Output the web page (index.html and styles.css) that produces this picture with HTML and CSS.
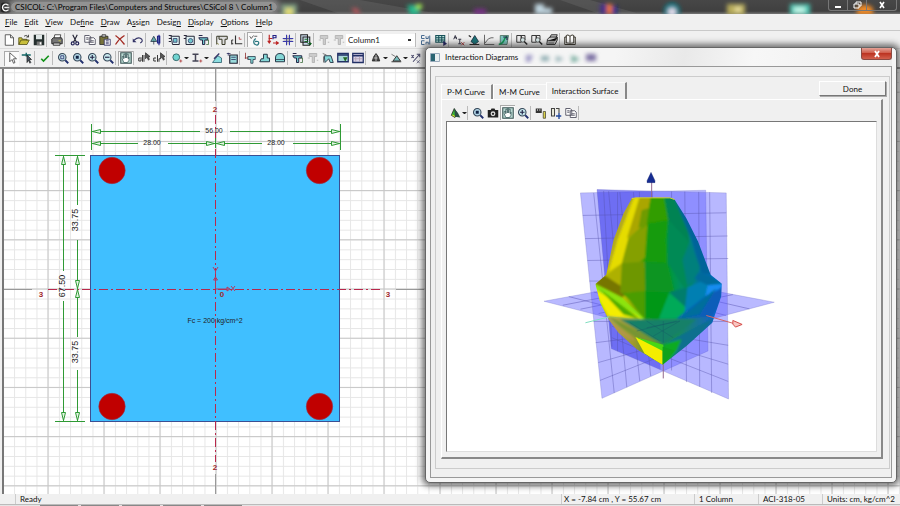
FILE: index.html
```html
<!DOCTYPE html>
<html lang="en">
<head>
<meta charset="utf-8">
<title>CSICOL</title>
<link rel="stylesheet" href="styles.css">
</head>
<body>
<svg class="defs" aria-hidden="true">
  <defs>
    <symbol id="new" viewBox="0 0 16 16"><path d="M3 1h7l4 4v10H3z" fill="#fff" stroke="#333"/><path d="M10 1v4h4" fill="none" stroke="#333"/></symbol>
    <symbol id="open" viewBox="0 0 16 16"><path d="M1 14V5h4l1 2h6v2M1 14l3-6h11l-3 6z" fill="#c8bf3c" stroke="#4a4710"/><path d="M8 3q3-3 6 1M14 1v3h-3" fill="none" stroke="#222"/></symbol>
    <symbol id="save" viewBox="0 0 16 16"><path d="M1 1h14v14H1z" fill="#26302f"/><path d="M4 1h8v6H4z" fill="#dfe6e6"/><path d="M5 10h7v5H5z" fill="#777"/><path d="M9 11h2v3H9z" fill="#fff"/></symbol>
    <symbol id="print" viewBox="0 0 16 16"><path d="M4 6l1-5h8l-1 5z" fill="#fff" stroke="#222"/><path d="M1 7l2-2h11l1 2v6H1z" fill="#777" stroke="#111"/><path d="M3 12h9v3H3z" fill="#ddd" stroke="#111"/><path d="M10 9h3" stroke="#dd4"/></symbol>
    <symbol id="cut" viewBox="0 0 16 16"><path d="M5 1l5 10M11 1L6 11" stroke="#223" stroke-width="1.5"/><g fill="none" stroke="#225" stroke-width="1.6"><circle cx="5" cy="12.500" r="2"/><circle cx="11" cy="12.500" r="2"/></g></symbol>
    <symbol id="copy" viewBox="0 0 16 16"><g fill="#fff" stroke="#445" stroke-width="1.100"><path d="M1 2h6l2 2v7H1zM7 5h6l2 2v7H7z"/><path d="M3 5h3M3 7h3M9 9h4M9 11h4"/></g></symbol>
    <symbol id="paste" viewBox="0 0 16 16"><path d="M1 3h11v11H1z" fill="#77733c" stroke="#222"/><path d="M4 1h5v3H4z" fill="#ccc" stroke="#222"/><path d="M7 7h8v8H7z" fill="#fff" stroke="#225"/><path d="M9 9h4M9 11h4M9 13h4" stroke="#225"/></symbol>
    <symbol id="delete" viewBox="0 0 16 16"><path d="M2 2q6 4 12 12M14 2Q7 6 2 14" fill="none" stroke="#a32c24" stroke-width="1.700"/></symbol>
    <symbol id="undo" viewBox="0 0 16 16"><path d="M3 8q6-5 10-1q2 3-2 5" fill="none" stroke="#336" stroke-width="1.500"/><path d="M1 6v5h5z" fill="#336"/></symbol>
    <symbol id="draw" viewBox="0 0 16 16"><path d="M5 3l-4 7h8zM5 9v5" fill="#6aa" stroke="#234"/><path d="M10 3h3v9h-3zM12 1v14" fill="#8cc" stroke="#228" stroke-width="1.500"/></symbol>
    <symbol id="secA" viewBox="0 0 16 16"><path d="M1 2h4M1 6h3M1 10h3M4 3h11v11H6z" fill="#dff3f4" stroke="#223" stroke-width="1.300"/><path d="M7 6h5v5H7z" fill="#6fc7cc" stroke="#336"/></symbol>
    <symbol id="secB" viewBox="0 0 16 16"><path d="M1 2h4M1 6h3M4 3h11v11H4z" fill="#dff3f4" stroke="#223" stroke-width="1.300"/><circle cx="10" cy="9" r="3" fill="#6fc7cc" stroke="#336"/></symbol>
    <symbol id="secC" viewBox="0 0 16 16"><path d="M1 2h5M1 5h12v3H9v6H6V8H3z" fill="#6fc7cc" stroke="#224" stroke-width="1.300"/><path d="M11 8h3v6h-3" fill="none" stroke="#363"/></symbol>
    <symbol id="tee" viewBox="0 0 16 16"><path d="M1 3v11M1 3h3M4 3h11v4h-3v7H8V7H4z" fill="#ddd" stroke="#332" stroke-width="1.300"/><path d="M1 12l3 2" stroke="#884"/></symbol>
    <symbol id="axisL" viewBox="0 0 16 16"><path d="M6 2v11h9M1 8v6M1 8h2M1 13h2" fill="none" stroke="#333" stroke-width="1.500"/><path d="M11 4v3h3" fill="none" stroke="#a33"/></symbol>
    <symbol id="snap" viewBox="0 0 16 16"><path d="M1 3l2 3 3-4M7 3h4" fill="none" stroke="#333"/><path d="M9 6q-4 3-2 7q5 4 6-1q0-3-5-2" fill="none" stroke="#2a7780" stroke-width="1.700"/></symbol>
    <symbol id="load" viewBox="0 0 16 16"><path d="M3 1v10M1 9l2 3 2-3M2 6h5M8 12h7M12 10l3 2-3 2" fill="none" stroke="#b22" stroke-width="1.500"/><path d="M8 7V2h4v3H8" fill="none" stroke="#228" stroke-width="1.500"/></symbol>
    <symbol id="cross" viewBox="0 0 16 16"><path d="M6 1v14M10 1v14M1 6h14M1 10h14" stroke="#33a" stroke-width="1.300"/><path d="M8 2v12M2 8h12" stroke="#888"/></symbol>
    <symbol id="report" viewBox="0 0 16 16"><path d="M1 1h9v10H1zM4 4h9v11H4z" fill="#cde" stroke="#222" stroke-width="1.400"/><path d="M6 7h5M6 10h5M10 13h5M13 11l2 2-2 2" stroke="#162" stroke-width="1.300"/></symbol>
    <symbol id="teeOff" viewBox="0 0 16 16"><path d="M3 2h10v4h-3v8H7V6H3z" fill="#ccc" stroke="#aaa"/><path d="M1 8h3M13 11h2" stroke="#aaa"/></symbol>
    <symbol id="cucn" viewBox="0 0 16 16"><path d="M6 2H2v4h4M8 3v3h3V3M6 9H2v5h4M8 14v-3h3v3M13 2v12" fill="none" stroke="#44688e" stroke-width="1.300"/></symbol>
    <symbol id="grid" viewBox="0 0 16 16"><path d="M1 2h12v9H1zM1 5h12M1 8h12M5 2v9M9 2v9" fill="#bde3dc" stroke="#165058" stroke-width="1.400"/><path d="M11 9l5 4-5 3z" fill="#226"/></symbol>
    <symbol id="ax" viewBox="0 0 16 16"><path d="M1 7l2-5 2 5M2 5h3M7 7h4M9 7v6M7 13h4" fill="none" stroke="#334" stroke-width="1.300"/><path d="M11 11l4 4M15 11l-4 4" stroke="#a33" stroke-width="1.300"/></symbol>
    <symbol id="surface" viewBox="0 0 16 16"><path d="M9 2l5 8-5 4-5-4z" fill="#1a7378" stroke="#123"/><path d="M1 2l3 2M2 14h13" stroke="#222" stroke-width="1.500"/></symbol>
    <symbol id="curve" viewBox="0 0 16 16"><path d="M2 1v13h13M3 12Q7 4 14 5" fill="none" stroke="#666" stroke-width="1.300"/></symbol>
    <symbol id="sheet" viewBox="0 0 16 16"><path d="M3 2h11l-2 12H3z" fill="#7cc4be" stroke="#465"/><path d="M1 14q6-1 8-8l3-3" fill="none" stroke="#195" stroke-width="2"/><path d="M7 4h5v4" fill="none" stroke="#224" stroke-width="1.500"/></symbol>
    <symbol id="find" viewBox="0 0 16 16"><path d="M1 2h6v9H1zM7 2h5v6H7z" fill="#eee" stroke="#333" stroke-width="1.300"/><circle cx="9" cy="8" r="3" fill="#dee" stroke="#333"/><path d="M11 10l4 4" stroke="#222" stroke-width="2"/></symbol>
    <symbol id="printer2" viewBox="0 0 16 16"><path d="M5 5l2-4h8l-2 5M2 7l3-3h10v4l-3 6H1z" fill="#ccc" stroke="#222" stroke-width="1.200"/><path d="M2 9h10l3-4M3 12h8" stroke="#222"/></symbol>
    <symbol id="book" viewBox="0 0 16 16"><path d="M8 3Q5 0 3 2v10q3-1 5 2q2-3 5-2V2Q11 0 8 3v10M3 4H1v10h14V4h-2" fill="#fff" stroke="#302c22" stroke-width="1.300"/></symbol>
    <symbol id="pointer" viewBox="0 0 16 16"><path d="M5 1v12l3-3 2 5 2-1-2-5h4z" fill="#fff" stroke="#333"/></symbol>
    <symbol id="reshape" viewBox="0 0 16 16"><path d="M1 4h12M7 1v5" stroke="#166" stroke-width="1.800"/><path d="M8 4v10l2-3 2 4 1-1-2-4h3z" fill="#456" stroke="#222"/></symbol>
    <symbol id="check" viewBox="0 0 16 16"><path d="M3 9l3 3 7-7" fill="none" stroke="#14941b" stroke-width="2.200"/></symbol>
    <symbol id="zoomW" viewBox="0 0 16 16"><circle cx="7" cy="7" r="5" fill="#bfe0e8" stroke="#345" stroke-width="1.400"/><path d="M5 5h4v4H5z" fill="none" stroke="#226"/><path d="M11 11l4 4" stroke="#22306e" stroke-width="2.400"/></symbol>
    <symbol id="zoomF" viewBox="0 0 16 16"><circle cx="7" cy="7" r="5" fill="#b4d7e8" stroke="#345" stroke-width="1.400"/><path d="M5 5h4v4H5z" fill="#124"/><path d="M11 11l4 4" stroke="#22306e" stroke-width="2.400"/></symbol>
    <symbol id="zoomP" viewBox="0 0 16 16"><circle cx="7" cy="7" r="5" fill="#c7e8ee" stroke="#345" stroke-width="1.400"/><path d="M4 7h6M7 4v6" stroke="#224" stroke-width="1.500"/><path d="M11 11l4 4" stroke="#22306e" stroke-width="2.400"/></symbol>
    <symbol id="zoomM" viewBox="0 0 16 16"><circle cx="7" cy="7" r="5" fill="#c7e8ee" stroke="#345" stroke-width="1.400"/><path d="M4 7h6" stroke="#224" stroke-width="1.500"/><path d="M11 11l4 4" stroke="#22306e" stroke-width="2.400"/></symbol>
    <symbol id="hand" viewBox="0 0 16 16"><path d="M1 1h14v14H1z" fill="#b9d8d2" stroke="#3c5555" stroke-width="1.400"/><path d="M5 14l-2-5V6h2v3-6h2v5-6h2v6-5h2v6l1-2v4l-2 3z" fill="#fff" stroke="#355"/></symbol>
    <symbol id="all" viewBox="0 0 16 16"><path d="M3 8h-2v4h3V7M6 4v9M8 4v9" fill="none" stroke="#333" stroke-width="1.300"/><path d="M10 1v8l2-2 2 4 1-1-1-4h2z" fill="#555" stroke="#333"/></symbol>
    <symbol id="clr" viewBox="0 0 16 16"><path d="M4 8H1v4h3M6 4v9M8 13V9h2" fill="none" stroke="#333" stroke-width="1.300"/><path d="M10 1v8l2-2 2 4 1-1-1-4h2z" fill="#555" stroke="#333"/></symbol>
    <symbol id="circle" viewBox="0 0 16 16"><circle cx="7" cy="7" r="4.500" fill="#71d5d2" stroke="#34686b" stroke-width="1.300"/><path d="M11 12h4M13 10v4" stroke="#a33"/></symbol>
    <symbol id="ibeam" viewBox="0 0 16 16"><path d="M2 3h8M6 3v9M2 12h8" fill="none" stroke="#445" stroke-width="2"/><path d="M11 12h4M13 10v4" stroke="#a33"/></symbol>
    <symbol id="poly" viewBox="0 0 16 16"><path d="M2 14l7-9 5 3v6z" fill="#8cdde0" stroke="#256"/><path d="M4 9l7-7" stroke="#336" stroke-width="1.600"/></symbol>
    <symbol id="rebar" viewBox="0 0 16 16"><path d="M5 4h10v11H5z" fill="#99dadb" stroke="#223" stroke-width="1.500"/><path d="M1 2h5M3 1v4M7 7h6M7 10h6" stroke="#225"/></symbol>
    <symbol id="shapeT" viewBox="0 0 16 16"><path d="M5 6h10v4h-3v5H9v-5H5z" fill="#85d7d7" stroke="#234"/><path d="M2 1v8M1 8h5" stroke="#822"/></symbol>
    <symbol id="shapeL" viewBox="0 0 16 16"><path d="M1 13l2-4h3V3h5v5h3v5z" fill="#85d7d7" stroke="#234" stroke-width="1.300"/></symbol>
    <symbol id="shapeD" viewBox="0 0 16 16"><path d="M2 13V8q0-6 6-6t6 6v5z" fill="#85d7d7" stroke="#234" stroke-width="1.300"/><path d="M2 10h12" stroke="#234"/></symbol>
    <symbol id="editS" viewBox="0 0 16 16"><path d="M3 5h9l3 9h-4l-2-5-5 5z" fill="#85d7d7" stroke="#234" stroke-width="1.200"/><path d="M1 2l5 2M2 6v8" stroke="#555"/></symbol>
    <symbol id="table" viewBox="0 0 16 16"><path d="M1 2h14v12H1z" fill="#d9d3e9" stroke="#223066" stroke-width="1.700"/><path d="M1 5h14" stroke="#223066" stroke-width="2"/><path d="M5 6v7M10 6v7M2 9h12" stroke="#a9a"/></symbol>
    <symbol id="tableD" viewBox="0 0 16 16"><path d="M1 2h14v11H1z" fill="#a9d8d8" stroke="#223066" stroke-width="1.700"/><path d="M1 4h14" stroke="#223066" stroke-width="2"/><path d="M8 7h6l-3 6z" fill="#262"/></symbol>
    <symbol id="bell" viewBox="0 0 16 16"><path d="M3 12l2-6 3-4 3 4 2 6z" fill="#444" stroke="#222"/><path d="M8 4v8M5 8h5" stroke="#ddd"/></symbol>
    <symbol id="angle" viewBox="0 0 16 16"><path d="M2 13h13M4 12l5-7 5 7z" fill="#7bb" stroke="#333" stroke-width="1.300"/><path d="M2 3l5 3" stroke="#555"/></symbol>
    <symbol id="scale" viewBox="0 0 16 16"><path d="M4 13l8-9M9 3h4v4M2 4l3 4M5 4L2 8" fill="none" stroke="#446" stroke-width="1.400"/><path d="M9 11l4 4M13 11l-4 4" stroke="#557"/></symbol>
    <symbol id="model" viewBox="0 0 16 16"><path d="M7 2l4 7-3 5-5-3z" fill="#38b536" stroke="#222"/><path d="M7 2l5 6 3 6-7-1" fill="#2b4f44"/><path d="M3 10l4 1 1 3" fill="#ed2"/></symbol>
    <symbol id="camera" viewBox="0 0 16 16"><path d="M1 4h4l1-2h4l1 2h4v10H1z" fill="#222"/><circle cx="8" cy="9" r="3.200" fill="#ddd"/><circle cx="8" cy="9" r="1.500" fill="#222"/></symbol>
    <symbol id="props" viewBox="0 0 16 16"><path d="M1 2h8v6H1z" fill="#333"/><path d="M3 4h1M6 4h1" stroke="#fff" stroke-width="2"/><path d="M11 6h3v9h-3z" fill="#dcd24a" stroke="#443"/></symbol>
    <symbol id="export" viewBox="0 0 16 16"><path d="M2 2h4v10H2zM8 2h4v6" fill="#eed" stroke="#444" stroke-width="1.400"/><path d="M8 12h7M12 8v8" stroke="#22489a" stroke-width="1.800"/></symbol>
    <filter id="soft" x="-50%" y="-50%" width="200%" height="200%"><feGaussianBlur stdDeviation="2"/></filter>
  </defs>
</svg>

<div class="app">
  <header class="titlebar">
    <svg class="glow" viewBox="0 0 900 14" preserveAspectRatio="none" aria-hidden="true">
      <path d="M300 0h60l80 14H340zM560 0h30l50 14h-40z" fill="#777" opacity=".3"/>
      <g filter="url(#soft)">
        <path d="M281 4h16v12h-16z" fill="#7b9c83"/><path d="M285 8h8v8h-8z" fill="#e1dc78"/>
        <path d="M351 8h6l4 6h-6z" fill="#b5555b"/>
        <path d="M407 5h15l-4 10h-8z" fill="#27b68c"/><path d="M416 4h6v5h-6z" fill="#9ce24d"/>
        <path d="M474 9h12v5h-12z" fill="#7b2d8c"/>
        <path d="M535 4h9v10h-9zM544 8h8v6h-8z" fill="#bfd4df"/>
        <path d="M600 4h8v10h-8z" fill="#473089"/><path d="M607 4h5v10h-5z" fill="#f0752a"/><path d="M612 6h5v8h-5z" fill="#272a94"/>
        <circle cx="672" cy="11" r="8" fill="#0e8290"/><circle cx="672" cy="12" r="4" fill="#e8dfee"/>
        <path d="M727 4h18v11h-18z" fill="#b8ac5c"/><path d="M735 7h6v5h-6z" fill="#e6dd9c"/>
        <path d="M790 4h20v11h-20z" fill="#49c5b2"/><path d="M794 7h11v6h-11z" fill="#bff4e6"/>
        <path d="M857 8q8-7 16 0v7h-16z" fill="#f08a26"/>
      </g>
    </svg>
    <svg class="logo" viewBox="0 0 12 12" aria-hidden="true"><rect width="12" height="12" rx="3" fill="#222"/><path d="M9 3.500A4 4 0 1 0 9 8.500M4 6h6" fill="none" stroke="#fff" stroke-width="1.700"/></svg>
    <h1 class="caption">CSICOL: C:\Program Files\Computers and Structures\CSiCol 8 \ Column1</h1>
    <div class="winbtns">
      <button aria-label="Minimize"><svg viewBox="0 0 10 8"><path d="M2 5h6v2H2z" fill="#fff"/></svg></button>
      <button aria-label="Restore"><svg viewBox="0 0 10 8"><path d="M4 3V1h5v4H7M2 3h5v4H2z" fill="none" stroke="#fff"/></svg></button>
      <button class="wide" aria-label="Close"><svg viewBox="0 0 10 8"><path d="M3 1l4 6M7 1L3 7" stroke="#fff" stroke-width="1.600"/></svg></button>
    </div>
  </header>

  <nav class="menu">
    <button><u>F</u>ile</button><button><u>E</u>dit</button><button><u>V</u>iew</button><button>De<u>f</u>ine</button><button><u>D</u>raw</button><button>A<u>s</u>sign</button><button>Desig<u>n</u></button><button><u>D</u>isplay</button><button><u>O</u>ptions</button><button><u>H</u>elp</button>
  </nav>

  <div class="toolbar">
    <button aria-label="New"><svg><use href="#new"/></svg></button><button aria-label="Open"><svg><use href="#open"/></svg></button><button aria-label="Save"><svg><use href="#save"/></svg></button><i></i>
    <button aria-label="Print"><svg><use href="#print"/></svg></button><i></i>
    <button aria-label="Cut"><svg><use href="#cut"/></svg></button><button aria-label="Copy"><svg><use href="#copy"/></svg></button><button aria-label="Paste"><svg><use href="#paste"/></svg></button><button aria-label="Delete"><svg><use href="#delete"/></svg></button><i></i>
    <button aria-label="Undo"><svg><use href="#undo"/></svg></button><i></i>
    <button aria-label="Edit column"><svg><use href="#draw"/></svg></button><i></i>
    <button aria-label="Section"><svg><use href="#secA"/></svg></button><button aria-label="Round section"><svg><use href="#secB"/></svg></button><button aria-label="Built-up section"><svg><use href="#secC"/></svg></button><i></i>
    <button aria-label="Elevation"><svg><use href="#tee"/></svg></button><button aria-label="Axes"><svg><use href="#axisL"/></svg></button><i></i>
    <button class="on" aria-label="Snap"><svg><use href="#snap"/></svg></button><i></i>
    <button aria-label="Loads"><svg><use href="#load"/></svg></button><button aria-label="Frame"><svg><use href="#cross"/></svg></button><i></i>
    <button aria-label="Report"><svg><use href="#report"/></svg></button><i></i>
    <button aria-label="Previous" disabled><svg><use href="#teeOff"/></svg></button><button aria-label="Next" disabled><svg><use href="#teeOff"/></svg></button>
    <select class="column" aria-label="Column"><option>Column1</option></select><i></i>
    <button aria-label="Capacity"><svg><use href="#cucn"/></svg></button><button aria-label="Results"><svg><use href="#grid"/></svg></button><i></i>
    <button aria-label="Properties"><svg><use href="#ax"/></svg></button><button aria-label="Interaction"><svg><use href="#surface"/></svg></button><button aria-label="Moment curvature"><svg><use href="#curve"/></svg></button><button aria-label="Stress"><svg><use href="#sheet"/></svg></button><i></i>
    <button aria-label="Quick report"><svg><use href="#find"/></svg></button><button aria-label="Preview"><svg><use href="#find"/></svg></button><button aria-label="Print report"><svg><use href="#printer2"/></svg></button><i></i>
    <button aria-label="Manual"><svg><use href="#book"/></svg></button>
  </div>

  <div class="toolbar second">
    <button class="on" aria-label="Select"><svg><use href="#pointer"/></svg></button><button aria-label="Reshape"><svg><use href="#reshape"/></svg></button><i></i>
    <button aria-label="Apply"><svg><use href="#check"/></svg></button><i></i>
    <button aria-label="Zoom window"><svg><use href="#zoomW"/></svg></button><button aria-label="Zoom all"><svg><use href="#zoomF"/></svg></button><button aria-label="Zoom in"><svg><use href="#zoomP"/></svg></button><button aria-label="Zoom out"><svg><use href="#zoomM"/></svg></button><i></i>
    <button class="on" aria-label="Pan"><svg><use href="#hand"/></svg></button><i></i>
    <button aria-label="Select all"><svg><use href="#all"/></svg></button><button aria-label="Clear selection"><svg><use href="#clr"/></svg></button><i></i>
    <button aria-label="Circle"><svg><use href="#circle"/></svg></button><b></b><button aria-label="I shape"><svg><use href="#ibeam"/></svg></button><b></b><button aria-label="Polygon"><svg><use href="#poly"/></svg></button><button aria-label="Rebar"><svg><use href="#rebar"/></svg></button><i></i>
    <button aria-label="T section"><svg><use href="#shapeT"/></svg></button><button aria-label="L section"><svg><use href="#shapeL"/></svg></button><button aria-label="Dome section"><svg><use href="#shapeD"/></svg></button><i></i>
    <button aria-label="Merge"><svg><use href="#secC"/></svg></button><button aria-label="Split" disabled><svg><use href="#teeOff"/></svg></button><button aria-label="Edit shape"><svg><use href="#editS"/></svg></button><button aria-label="Table view"><svg><use href="#tableD"/></svg></button><button aria-label="Table"><svg><use href="#table"/></svg></button><i></i>
    <button aria-label="Align"><svg><use href="#bell"/></svg></button><b></b><button aria-label="Rotate"><svg><use href="#angle"/></svg></button><b></b><button aria-label="Scale"><svg><use href="#scale"/></svg></button>
  </div>

  <main class="work">
    <svg class="drawing" viewBox="4 69 896 425" preserveAspectRatio="xMinYMin slice" role="img" aria-label="Column section">
      <defs>
        <pattern id="minor" x="215.700" y="288.700" width="11.200" height="9.840" patternUnits="userSpaceOnUse"><path d="M.5 0v10M0 .5h12" stroke="#e6e6e6" fill="none"/></pattern>
        <pattern id="major" x="215.500" y="288.500" width="56" height="49.200" patternUnits="userSpaceOnUse"><path d="M.5 0v50M0 .5h56" stroke="#c6c6c6" fill="none"/></pattern>
        <marker id="arr" viewBox="0 0 9 6" markerWidth="9" markerHeight="6" refX="9" refY="3" orient="auto-start-reverse" markerUnits="userSpaceOnUse"><path d="M.5 1L8.500 3 .5 5z" fill="#e4f4e4" stroke="#2f9a35"/></marker>
      </defs>
      <rect x="4" y="69" width="896" height="425" fill="#fff"/>
      <rect x="4" y="69" width="896" height="425" fill="url(#minor)"/>
      <rect x="4" y="69" width="896" height="425" fill="url(#major)"/>
      <path d="M215.500 69v32M215.500 474v20M4 289.500h28M396 289.500h28" stroke="#999"/>
      <rect x="90.500" y="155.500" width="249" height="266" fill="#40bfff" stroke="#3c4f92"/>
      <g fill="#c00000" stroke="#99304a" stroke-width=".6"><circle cx="112" cy="170.500" r="13.200"/><circle cx="319.500" cy="170.500" r="13.200"/><circle cx="112" cy="406.500" r="13.200"/><circle cx="319.500" cy="406.500" r="13.200"/></g>
      <path d="M215.500 115v347M48 289.500h332" stroke="#b8284c" stroke-dasharray="9 3 2 3" fill="none"/>
      <g stroke="#2f9a35" fill="none">
        <path d="M91.500 124v26M340.500 124v26M55 155.500h30M55 421.500h30M215.500 138v10"/>
        <path d="M200 131.500H92" marker-end="url(#arr)"/><path d="M230 131.500h110" marker-end="url(#arr)"/>
        <path d="M138 143.500H92" marker-end="url(#arr)"/><path d="M168 143.500h47" marker-end="url(#arr)"/>
        <path d="M262 143.500h-46" marker-end="url(#arr)"/><path d="M293 143.500h47" marker-end="url(#arr)"/>
        <path d="M63.500 271V156" marker-end="url(#arr)"/><path d="M63.500 301v120" marker-end="url(#arr)"/>
        <path d="M77.500 205v-49" marker-end="url(#arr)"/><path d="M77.500 240v49" marker-end="url(#arr)"/>
        <path d="M77.500 337v-48" marker-end="url(#arr)"/><path d="M77.500 370v51" marker-end="url(#arr)"/>
      </g>
      <g class="dim"><text x="214" y="133">56.00</text><text x="152" y="145">28.00</text><text x="276" y="145">28.00</text><text x="215" y="323">Fc = 200 kg/cm^2</text></g>
      <g class="vdim"><text transform="translate(78 220) rotate(-90)">33.75</text><text transform="translate(65 286) rotate(-90)">67.50</text><text transform="translate(78 352) rotate(-90)">33.75</text></g>
      <g class="axis"><text x="215" y="112">2</text><text x="215" y="470">2</text><text x="41" y="297">3</text><text x="388" y="297">3</text><text x="222" y="297">0</text></g>
      <path d="M215.500 289v-11M213.500 280l2-3 2 3zM216 289h13M227 287l3 2-3 2zM213 267l2.500 4 2.500-4M215.500 271v3M231 286l4 5M235 286l-4 5" stroke="#b23a62" fill="none"/>
    </svg>

    <section class="dialog" aria-label="Interaction Diagrams">
      <header class="dlg-title">
        <svg class="dlg-icon" viewBox="0 0 10 10" aria-hidden="true"><path d="M.5 1.500h9v8h-9z" fill="#e8eef0" stroke="#9ab"/><path d="M1 2h4v7H1z" fill="#2a6472"/></svg>
        <h2>Interaction Diagrams</h2>
        <svg class="ghost" viewBox="0 0 80 14" aria-hidden="true"><g filter="url(#soft)"><path d="M4 5h7l-3 7H4z" fill="#9a94c4"/><path d="M19 6h8v5h-8zM34 6l8 3-8 3z" fill="#8cabb0"/><path d="M49 5l9 4-8 4z" fill="#73aa9c"/><path d="M64 4h10v7H64z" fill="#7c6fa3"/></g></svg>
        <button class="dlg-close" aria-label="Close dialog"><svg viewBox="0 0 10 8"><path d="M3 1l4 6M7 1L3 7" stroke="#fff" stroke-width="1.800"/></svg></button>
      </header>
      <div class="client">
        <div class="group">
          <div class="tabrow">
            <div class="tabs" role="tablist">
              <button role="tab">P-M Curve</button><button role="tab">M-M Curve</button><button role="tab" class="active" aria-selected="true">Interaction Surface</button>
            </div>
            <button class="done">Done</button>
          </div>
          <div class="panel">
            <div class="toolbar view-tools">
              <button aria-label="Surface style"><svg><use href="#model"/></svg></button><b></b><i></i>
              <button aria-label="Zoom extents"><svg><use href="#zoomF"/></svg></button><button aria-label="Capture"><svg><use href="#camera"/></svg></button><button class="on" aria-label="Pan view"><svg><use href="#hand"/></svg></button><button aria-label="Zoom view"><svg><use href="#zoomP"/></svg></button><i></i>
              <button aria-label="View properties"><svg><use href="#props"/></svg></button><button aria-label="Export view"><svg><use href="#export"/></svg></button><button aria-label="Copy view"><svg><use href="#copy"/></svg></button><i></i>
            </div>
            <div class="view">
              <svg viewBox="0 0 1293 993" role="img" aria-label="Interaction surface">
                <defs>
                  <linearGradient id="hue" gradientUnits="userSpaceOnUse" x1="210" y1="0" x2="560" y2="0"><stop offset="0" stop-color="#c4c400"/><stop offset=".18" stop-color="#d0c800"/><stop offset=".3" stop-color="#7ea300"/><stop offset=".42" stop-color="#169a08"/><stop offset=".6" stop-color="#00993b"/><stop offset=".75" stop-color="#008a78"/><stop offset=".9" stop-color="#0868ae"/><stop offset="1" stop-color="#0d76dc"/></linearGradient>
                  <linearGradient id="low" gradientUnits="userSpaceOnUse" x1="230" y1="0" x2="550" y2="0"><stop offset="0" stop-color="#a9a455"/><stop offset=".25" stop-color="#a09a2c"/><stop offset=".45" stop-color="#388e36"/><stop offset=".65" stop-color="#158b54"/><stop offset="1" stop-color="#1163c4"/></linearGradient>
                  <clipPath id="body"><path d="M305 115L318 112 420 112 434 118 470 175 505 245 543 345 577 372 575 410 548 490 470 560 398 617 320 570 265 520 235 480 210 430 195 373 228 345 250 240 280 160z"/></clipPath>
                  <filter id="blend" x="-5%" y="-5%" width="110%" height="110%"><feGaussianBlur stdDeviation="3"/></filter>
                </defs>
                <g transform="translate(252 116)">
                  <path d="M40 425L385 362 735 428 400 517z" fill="#5858ff" fill-opacity=".42" stroke="#7777cc"/>
                  <path d="M97 437L440 370M150 449l340-68M205 462l340-70M260 477l350-72M115 411l345 88M190 397l330 85M260 384l330 84M330 372l330 76" stroke="#5450b0" stroke-opacity=".7" stroke-width="2" fill="none"/>
                  <path d="M150 98L528 90 535 575 215 718z" fill="#5656ff" fill-opacity=".42" stroke="#7777c8"/>
                  <path d="M200 88L590 98 597 720 243 568z" fill="#5656ff" fill-opacity=".42" stroke="#7777c8"/>
                  <path d="M200 88L368 94 392 632 243 568z" fill="#2424d8" fill-opacity=".3"/>
                  <path d="M157 166l433-8M164 236l430-8M171 302l425-6M177 364h30M189 486h405M196 550l200-25 200 33M204 610l194-55 198 60M209 664l189-75 198 78M190 98l62 604M235 93l55 592M269 96l60 570M310 96l52 555M328 95v70M425 94v540M465 94l5 575M507 95l3 588M540 96l6 606M245 500l155 60M245 535l155 65M262 96v480M220 92l25 470" stroke="#5450a8" stroke-opacity=".6" stroke-width="2" fill="none"/>
                  <path d="M365 65v50M400 610v48" stroke="#93688c" stroke-width="3"/>
                  <path d="M363 36l12 25v6h-24v-6z" fill="#162c91" stroke="#132267"/>
                  <g clip-path="url(#body)"><g filter="url(#blend)">
                  <path d="M180 100h410v530H180z" fill="url(#hue)"/>
                  <path d="M275 160l30-45 15 1-55 140-35 89 15-105z" fill="#b3aa1a"/>
                  <path d="M312 110l17 0L295 235 275 310 235 335 262 240z" fill="#e5dc00"/>
                  <path d="M329 110l33 0-12 81-60 45z" fill="#aaa600"/>
                  <path d="M335 150l65-20 5 50-80 24z" fill="#709b00"/>
                  <path d="M362 110l39 0 15 71-66 10z" fill="#309d03"/>
                  <path d="M295 235l60-44-3 95-68 60-9-36z" fill="#85a000"/>
                  <path d="M352 190l64-10-8 60 5 70-69-5z" fill="#159b08"/>
                  <path d="M405 110l25 0 40 65 10 75-65-70z" fill="#008353"/>
                  <path d="M430 105l45 65 35 75 38 100-33-5-30-100z" fill="#02639a"/>
                  <path d="M415 180l65 70 28 90-35 60-60-90z" fill="#008a55"/>
                  <path d="M480 245l30 75-5 40-32 20-15-80z" fill="#00807b"/>
                  <path d="M230 345l45-35 55 80-60 12-75-29z" fill="#aeb000"/>
                  <path d="M220 345l75 49-20 22-85-43z" fill="#777600"/>
                  <path d="M275 310l69-5 11 90-85 5z" fill="#6e9700"/>
                  <path d="M344 305l69 5 22 90-90-6z" fill="#0b9520"/>
                  <path d="M275 400l70-6 5 91-54-65z" fill="#4c9d06"/>
                  <path d="M345 394l75 6-35 83-40-4z" fill="#009717"/>
                  <path d="M190 370l85 43 68 65-55 4-93-50z" fill="#8ce40b"/>
                  <path d="M185 383l150 95-100-8z" fill="#f4ed00"/>
                  <path d="M205 385l125 94-50-14z" fill="#50ac05"/>
                  <path d="M418 400l60 50-15 28-78 5z" fill="#00aa59"/>
                  <path d="M418 398l55-15 2 67z" fill="#007d6c"/>
                  <path d="M473 383l60-25 44 15-45 37-70 68z" fill="#047fb2"/>
                  <path d="M505 338l38 10 40 24-49 5-40-20z" fill="#036a9c"/>
                  <path d="M534 377l48-5-25 32-30 6z" fill="#138df2"/>
                  <path d="M585 380l-15 59-22 36-110 4 90-70z" fill="#085db9"/>
                  <path d="M560 385l-50 80-62 13z" fill="#056e9b"/>
                  <path d="M225 470l120 9 120-2 90-8-3 25-75 66-79 67-95-55-78-92z" fill="url(#low)"/>
                  <path d="M230 480l90 65-25-8-55-36z" fill="#b59448"/>
                  <path d="M270 480h230l-102 75z" fill="#158068"/>
                  <path d="M400 555l155-80-55 65-102 77z" fill="#086f8e"/>
                  <path d="M400 555l55-15-15 35-40 50z" fill="#0cab22"/>
                  <path d="M235 470l163 85-78-18-50-35z" fill="#779531"/>
                  </g>
                  <path d="M316 533l82 29v58l-55-38z" fill="#f4ed00"/>
                  <path d="M316 533l84 23v20z" fill="#48d714"/>
                  <path d="M398 562l36 12-36 45z" fill="#0fa31b"/>
                  </g>
                  <path d="M305 115L318 113 420 113 434 118" fill="none" stroke="#d7cf35" stroke-width="3"/>
                  <path d="M350 505l100-20M350 485l80 50M300 490l90 55M400 485v65M320 515l120-30M370 530l80-45" stroke="#155c64" stroke-opacity=".6" stroke-width="2" fill="none"/>
                  <path d="M165 490l72-18" stroke="#80ddc0" stroke-width="3"/><path d="M235 472l100 10" stroke="#5aae75"/>
                  <path d="M530 468l82 24" stroke="#d56464" stroke-width="3"/><path d="M610 483l28 12-20 8-8-9z" fill="#f8c6c1" stroke="#d54b48" stroke-width="3"/>
                </g>
              </svg>
            </div>
          </div>
        </div>
      </div>
    </section>
  </main>

  <footer class="status">
    <span class="grip"></span><span class="ready">Ready</span><span class="coords">X = -7.84 cm , Y = 55.67 cm</span><span class="cell">1 Column</span><span class="cell">ACI-318-05</span><span class="units">Units: cm, kg/cm^2</span>
  </footer>
  <div class="taskedge"><s></s><s></s><s></s><s></s><s></s></div>
</div>
</body>
</html>
```
FILE: styles.css
```css
* { box-sizing: border-box; }
body { margin: 0; background: #f0f0f0; color: #111; font: 8px/10px Lato, "Liberation Sans", sans-serif; overflow: hidden; }
button { border: 0; padding: 0; margin: 0; background: none; color: inherit; font: inherit; }
h1, h2 { margin: 0; font: inherit; }
.defs { position: absolute; width: 0; height: 0; }
.app { display: flex; flex-direction: column; min-height: 100vh; }

.titlebar { position: relative; display: flex; align-items: center; height: 14px; padding-left: 1px; background: linear-gradient(#474747, #404040 80%, #777); overflow: hidden; }
.glow { position: absolute; inset: 0; width: 100%; height: 100%; }
.logo { position: relative; width: 10px; height: 11px; }
.caption { position: relative; padding: 0 4px; border-radius: 6px; background: rgba(160, 160, 160, .85); box-shadow: 0 0 6px 3px rgba(160, 160, 160, .8); color: #000; white-space: nowrap; }
.winbtns { position: relative; display: flex; align-self: flex-start; height: 11px; margin-left: auto; margin-right: 3px; border: 1px solid #777; border-top: 0; border-radius: 0 0 3px 3px; }
.winbtns button { display: flex; align-items: center; justify-content: center; width: 19px; border-right: 1px solid #777; }
.winbtns .wide { width: 29px; border: 0; }
.winbtns svg { width: 10px; height: 8px; }

.menu { display: flex; align-items: center; gap: 7px; height: 17px; padding-left: 5px; border-bottom: 1px solid #c9c9c9; }
.menu u { text-underline-offset: 1px; }

.toolbar { display: flex; align-items: center; height: 18px; padding-left: 1px; border-bottom: 1px solid #dcdcdc; }
.toolbar.second { height: 20px; padding-left: 4px; border-bottom: 2px solid #888; }
.toolbar button { display: flex; flex: none; align-items: center; justify-content: center; width: 15px; height: 15px; }
.toolbar button.on { background: #fafafa; box-shadow: inset 1px 1px #aaa; }
.toolbar svg { width: 12px; height: 12px; }
.toolbar i { flex: none; width: 3px; height: 14px; border-left: 1px solid #bbb; }
.toolbar b { flex: none; width: 5px; height: 2px; border: 2px solid transparent; border-top-color: #222; border-bottom: 0; }
.column { width: 69px; height: 12px; padding: 0 4px 0 2px; border: 0; background: #fff linear-gradient(#333, #333) no-repeat 62px 5px / 3px 2px; color: #222; font: inherit; appearance: none; }

.work { position: relative; flex: 1; margin-left: 2px; border-left: 2px solid #777; }
.drawing { display: block; width: 100%; }
.dim, .vdim, .axis { font-family: "Liberation Sans", Arial, sans-serif; text-anchor: middle; fill: #222; }
.dim { font-size: 7px; }
.vdim { font-size: 9px; }
.axis { font-size: 8px; font-weight: 700; fill: #a0282c; }

.dialog { position: absolute; inset: -22px 3px 11px 47%; display: flex; flex-direction: column; padding: 0 4px 4px; border: 1px solid #666; border-radius: 5px; background: #f5f5f5; box-shadow: 0 0 6px 3px rgba(40, 40, 40, .65); }
.dlg-title { display: flex; align-items: center; height: 18px; background: linear-gradient(100deg, #f5f5f5 40%, #e9e9e9 55%, #f7f7f7 70%, #eee); }
.dlg-icon { width: 10px; height: 10px; margin-right: 5px; }
.ghost { width: 80px; height: 14px; margin-left: 4px; }
.dlg-close { display: flex; align-items: center; justify-content: center; align-self: flex-start; width: 31px; height: 12px; margin-left: auto; border: 1px solid #8b4a42; border-top: 0; border-radius: 0 0 3px 3px; background: linear-gradient(#e3a398, #cf5c4a 45%, #bc3422 50%, #d2604d); }
.dlg-close svg { width: 10px; height: 8px; }
.client { display: flex; flex: 1; min-height: 0; padding: 9px 1px 8px 4px; border: 1px solid #999; background: #f0f0f0; }
.group { display: flex; flex: 1; flex-direction: column; min-width: 0; padding: 4px 6px 9px 5px; border: 1px solid #ccc; }
.tabrow { display: flex; justify-content: space-between; height: 18px; margin-right: -3px; }
.tabs { display: flex; align-items: flex-end; }
.tabs button { height: 15px; padding: 0 6px 0 5px; border-right: 2px solid #888; border-left: 1px solid #fff; border-top: 1px solid #fafafa; }
.tabs .active { height: 17px; }
.tabs button:nth-child(2) { border-right: 0; }
.done { width: 67px; height: 15px; border: 1px solid #fff; border-right-color: #777; border-bottom-color: #777; box-shadow: 1px 1px #aaa; }
.panel { display: flex; flex: 1; flex-direction: column; min-height: 0; padding: 4px 4px 5px; border: 1px solid #fff; border-right: 2px solid #888; border-bottom: 2px solid #888; }
.view-tools { height: 17px; border: 0; }
.view { flex: 1; min-height: 0; border: 1px solid #777; border-right-color: #ddd; border-bottom-color: #ddd; background: #fff; }
.view svg { display: block; width: 100%; height: 100%; }

.status { display: flex; align-items: center; height: 10px; white-space: nowrap; }
.status span { height: 10px; padding-left: 4px; border-left: 1px solid #ccc; }
.status .grip { width: 15px; border: 0; }
.status .ready { flex: 1; }
.status .coords { width: 133px; padding-left: 2px; }
.status .cell { width: 64px; }
.status .units { width: 78px; }
.taskedge { display: flex; gap: 3px; height: 2px; padding-left: 40px; border-top: 1px solid #bbb; background: #e4e4e4; }
.taskedge s { width: 38px; height: 1px; background: #888; }
```
